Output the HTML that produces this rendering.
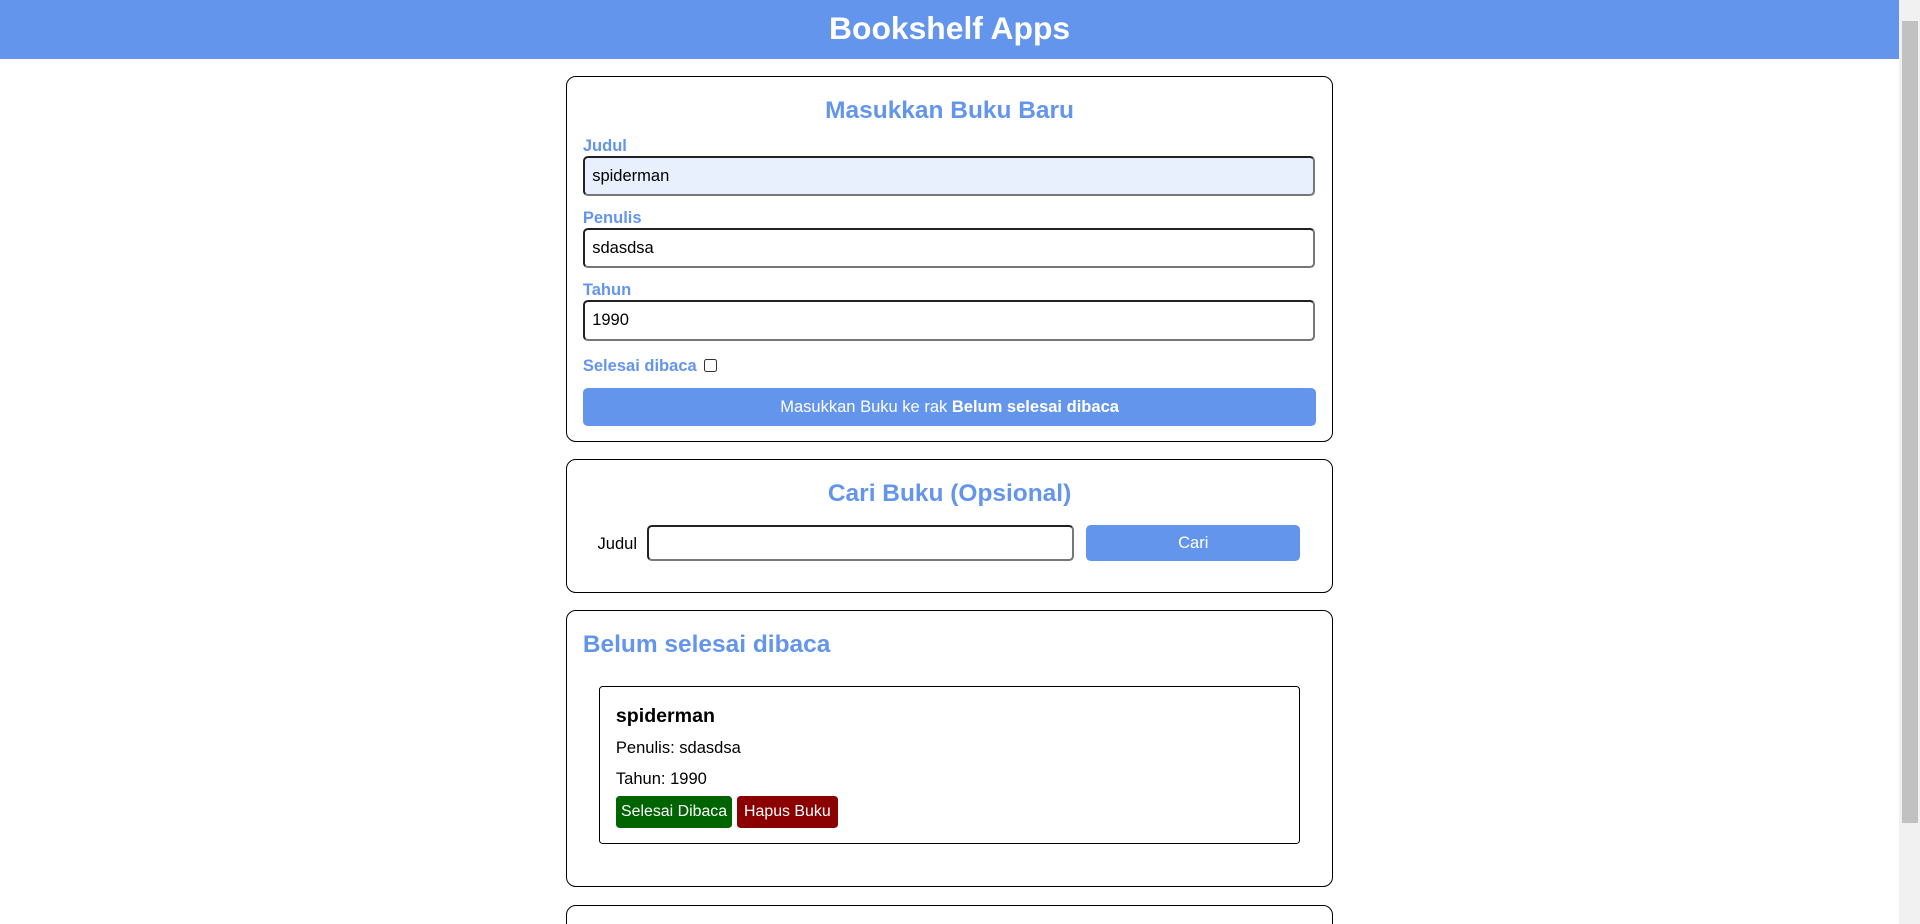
<!DOCTYPE html>
<html><head><meta charset="utf-8"><style>
html,body{margin:0;padding:0;overflow:hidden;background:#fff}
#wrap{zoom:1.22449;width:1568px;height:755px;position:relative;overflow:hidden;font-family:"Liberation Sans",sans-serif;color:#000}
.abs{position:absolute}
header{position:absolute;left:0;top:0;width:1551px;height:48px;background:#6495ed;color:#fff;font-weight:bold;font-size:26px;text-align:center;line-height:46px}
.sb{position:absolute;left:1551px;top:0;width:17px;height:755px;background:#f1f1f1}
.sb div{position:absolute;left:2px;top:17px;width:13px;height:655px;background:#c1c1c1}
.card{position:absolute;left:462px;width:625px;border:1px solid #000;border-radius:8px}
.h{position:absolute;color:#6495ed;font-weight:bold;font-size:20px}
.lbl{position:absolute;left:476px;color:#6495ed;font-weight:bold;font-size:13.5px}
.inp{position:absolute;left:476px;width:589px;height:30px;border:2px solid #222;border-bottom-color:#777;border-right-color:#777;border-radius:4px;font-size:13.5px;line-height:30px;padding-left:6px;box-sizing:content-box}
.btn{position:absolute;background:#6495ed;color:#fff;border-radius:4px;text-align:center;font-size:13.5px}
</style></head><body><div id="wrap">
<header>Bookshelf Apps</header>
<div class="sb"><div></div></div>
<div class="card" style="top:62px;height:297px"></div>
<div class="h" style="left:462px;width:627px;text-align:center;top:79px">Masukkan Buku Baru</div>
<div class="lbl" style="top:111px">Judul</div>
<div class="inp" style="top:127px;background:#e8f0fe">spiderman</div>
<div class="lbl" style="top:170px">Penulis</div>
<div class="inp" style="top:186px">sdasdsa</div>
<div class="lbl" style="top:229px">Tahun</div>
<div class="inp" style="top:245px">1990</div>
<div class="lbl" style="top:291px">Selesai dibaca</div>
<div class="abs" style="left:575px;top:293px;width:9px;height:9px;border:1px solid #333;border-radius:2px"></div>
<div class="btn" style="left:476px;top:317px;width:599px;height:31px;line-height:31px">Masukkan Buku ke rak <b>Belum selesai dibaca</b></div>

<div class="card" style="top:375px;height:108px"></div>
<div class="h" style="left:462px;width:627px;text-align:center;top:392px">Cari Buku (Opsional)</div>
<div class="abs" style="left:488px;top:436px;font-size:13.5px">Judul</div>
<div class="abs" style="left:528px;top:429px;width:346px;height:26px;border:2px solid #222;border-bottom-color:#777;border-right-color:#777;border-radius:4px"></div>
<div class="btn" style="left:887px;top:429px;width:175px;height:29px;line-height:29px">Cari</div>

<div class="card" style="top:498px;height:225px"></div>
<div class="h" style="left:476px;top:515px">Belum selesai dibaca</div>
<div class="abs" style="left:489px;top:560px;width:571px;height:128px;border:1px solid #000;border-radius:3px"></div>
<div class="abs" style="left:503px;top:576px;font-weight:bold;font-size:16px">spiderman</div>
<div class="abs" style="left:503px;top:603px;font-size:13.5px">Penulis: sdasdsa</div>
<div class="abs" style="left:503px;top:628px;font-size:13.5px">Tahun: 1990</div>
<div class="abs" style="left:503px;top:650px;width:95px;height:26px;line-height:26px;background:#006400;color:#fff;border-radius:3px;text-align:center;font-size:13px">Selesai Dibaca</div>
<div class="abs" style="left:602px;top:650px;width:82px;height:26px;line-height:26px;background:#8b0000;color:#fff;border-radius:3px;text-align:center;font-size:13px">Hapus Buku</div>

<div class="card" style="top:739px;height:60px"></div>
</div></body></html>
